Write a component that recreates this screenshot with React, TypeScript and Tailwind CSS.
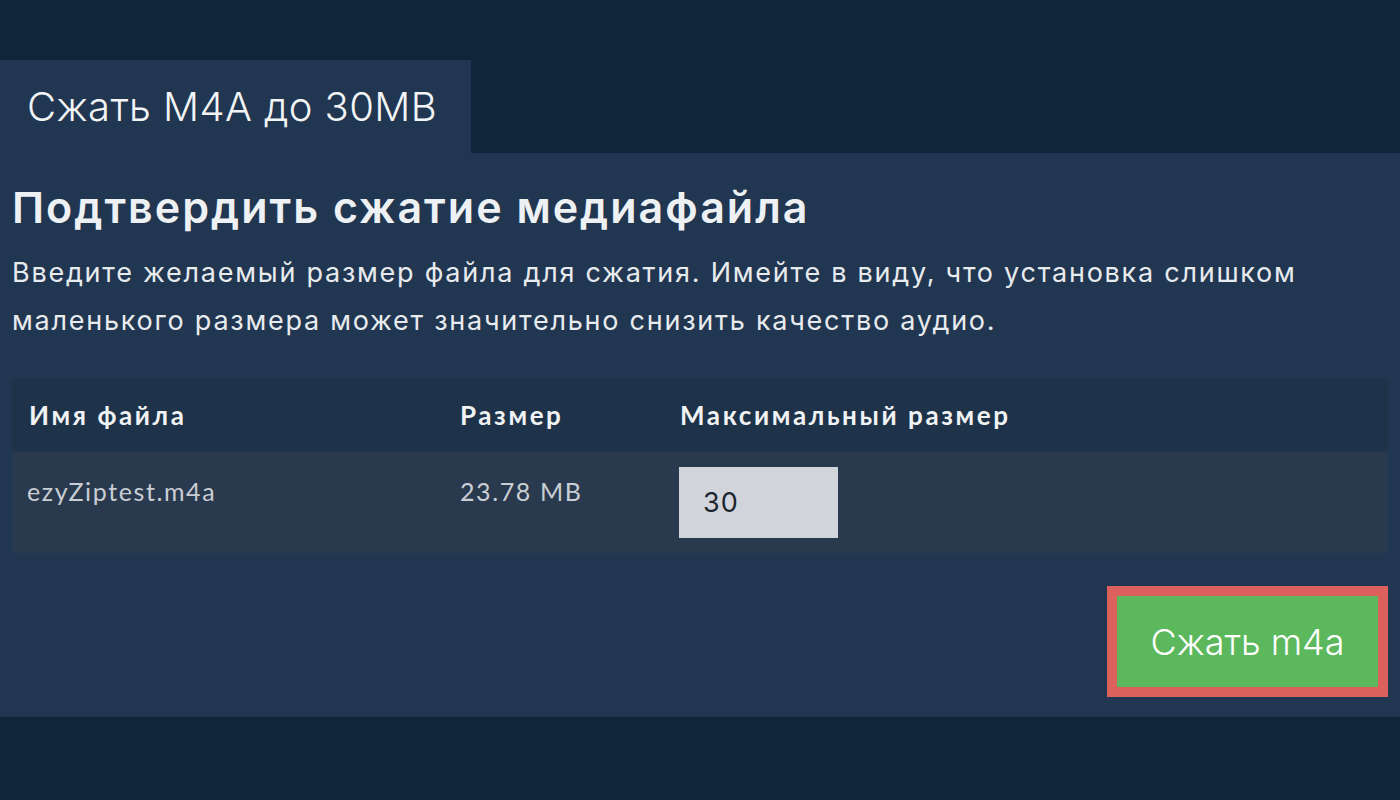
import { useState } from 'react';

// main panel colours
const panelBg = 'bg-[#213650]';

export default function App() {
    const [maxSize, setMaxSize] = useState<string>("30");

    return (
        <div className="w-[1400px] h-[800px] bg-[#10243a] flex flex-col pt-[60px] font-['Inter',sans-serif]">
            {/* tab */}
            <div className={`${panelBg} w-[471px] h-[93px] flex items-center pl-[27px]`}>
                <h1 className="text-[40px] tracking-[0.4px] font-light text-[#f2f4f6] leading-none">Сжать M4A до 30MB</h1>
            </div>

            <div className={`${panelBg} h-[564px] px-[12px] pt-[26px]`}>
                <h2 className="text-[43px] tracking-[2px] font-semibold text-[#eef1f4] leading-[56px]">
                    Подтвердить сжатие медиафайла
                </h2>
                <p className="mt-[14px] text-[27px] tracking-[1.75px] text-[#e8ebee] leading-[48px]">
                    Введите желаемый размер файла для сжатия. Имейте в виду, что установка слишком маленького размера может значительно снизить качество аудио.
                </p>

                <div className="mt-[33px] font-['Lato',sans-serif]">
                    <div className="grid grid-cols-[431px_220px_1fr] h-[74px] items-center bg-[#1e3349] text-[26px] tracking-[2.6px] font-bold text-[#f0f2f4]">
                        <div className="pl-[17px]">Имя файла</div>
                        <div className="pl-[17px]">Размер</div>
                        <div className="pl-[17px]">Максимальный размер</div>
                    </div>
                    <div className="grid grid-cols-[431px_220px_1fr] h-[101px] items-start bg-[#2a3a4e] text-[25px] tracking-[1.6px] text-[#c9ced4]">
                        <div className="pl-[15px] pt-[21px]">ezyZiptest.m4a</div>
                        <div className="pl-[17px] pt-[21px]">23.78 MB</div>
                        <div className="pl-[16px] pt-[15px]">
                            <input
                                value={maxSize}
                                onChange={(e) => setMaxSize(e.target.value)}
                                className="w-[159px] h-[71px] bg-[#d1d5db] text-[#1d2530] text-[27px] tracking-[1px] pl-[24px] font-['Inter',sans-serif] outline-none"
                            />
                        </div>
                    </div>
                </div>

                <div className="flex justify-end mt-[33px]">
                    <button className="bg-[#5cb85c] border-[10px] border-[#dc605c] w-[281px] h-[111px] text-[36px] font-light text-white">
                        Сжать m4a
                    </button>
                </div>
            </div>
        </div>
    );
}
